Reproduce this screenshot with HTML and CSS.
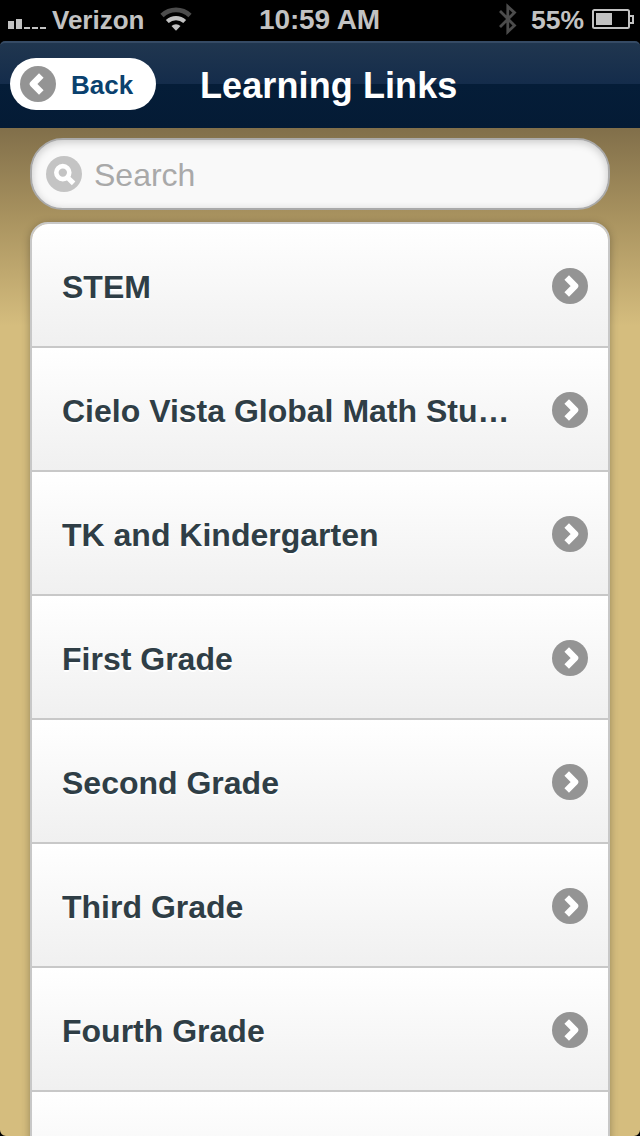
FILE: index.html
```html
<!DOCTYPE html>
<html lang="en">
<head>
    <meta charset="UTF-8">
    <meta name="viewport" content="width=device-width, initial-scale=1.0">
    <title>Learning Links</title>
    <link rel="stylesheet" href="styles.css">
</head>
<body>
    <!-- shared icons -->
    <svg class="defs" width="0" height="0">
        <symbol id="arrow" viewBox="0 0 36 36">
            <circle cx="18" cy="18" r="18" fill="#949494"/>
            <path d="M14.7 9.4L23.1 18l-8.4 8.6" fill="none" stroke="#fff" stroke-width="6.4" stroke-linejoin="round"/>
        </symbol>
    </svg>

    <!-- status bar -->
    <div class="status-bar">
        <div class="status-left">
            <svg width="38" height="10" viewBox="0 0 38 10" fill="#c2c2c2">
                <path d="M0 2h6v8H0zM8 0h6v10H8zM16 8h6v2h-6zM24 8h6v2h-6zM32 8h6v2h-6z"/>
            </svg>
            <span class="carrier">Verizon</span>
            <svg class="wifi" width="32" height="24" viewBox="0 0 32 24" fill="none">
                <path d="M2 8.5a20.5 20.5 0 0 1 28 0" stroke="#4c4c4c" stroke-width="4.8"/>
                <path d="M7.3 14.5a12.8 12.8 0 0 1 17.4 0" stroke="#c2c2c2" stroke-width="4.2"/>
                <path d="M11.5 19a6.5 6.5 0 0 1 9 0L16 23.7z" fill="#c2c2c2"/>
            </svg>
        </div>
        <span class="time">10:59 AM</span>
        <div class="status-right">
            <svg class="bluetooth" width="18" height="32" viewBox="0 0 18 32" fill="none" stroke="#4c4c4c" stroke-width="2.8">
                <path d="M1 8l14.5 14.4-6.7 6.4V3.4l6.7 6.2L1 24"/>
            </svg>
            <span class="percent">55%</span>
            <svg class="battery" width="42" height="20" viewBox="0 0 42 20">
                <rect x="1" y="1" width="36" height="18" rx="1.5" fill="none" stroke="#c2c2c2" stroke-width="2"/>
                <path d="M38 7h3v7h-3" fill="none" stroke="#c2c2c2" stroke-width="2"/>
                <rect x="4" y="4" width="16" height="12" fill="#c2c2c2"/>
            </svg>
        </div>
    </div>

    <div class="header">
        <a href="#" class="back-btn">
            <svg class="back-icon" width="36" height="36"><use href="#arrow"/></svg>
            <span>Back</span>
        </a>
        <h1>Learning Links</h1>
    </div>

    <div class="content">
        <label class="search">
            <svg width="36" height="36" viewBox="0 0 36 36" fill="none" stroke="#fff">
                <circle cx="18" cy="18" r="18" fill="#c4c4c4" stroke="none"/>
                <circle cx="16.8" cy="16.6" r="6.5" stroke-width="4.6"/>
                <path d="M21 21l6.6 6.4" stroke-width="5"/>
            </svg>
            <input type="text" placeholder="Search">
        </label>

        <ul class="links">
            <li><a href="#"><span>STEM</span><svg><use href="#arrow"/></svg></a></li>
            <li><a href="#"><span>Cielo Vista Global Math Stu…</span><svg><use href="#arrow"/></svg></a></li>
            <li><a href="#"><span>TK and Kindergarten</span><svg><use href="#arrow"/></svg></a></li>
            <li><a href="#"><span>First Grade</span><svg><use href="#arrow"/></svg></a></li>
            <li><a href="#"><span>Second Grade</span><svg><use href="#arrow"/></svg></a></li>
            <li><a href="#"><span>Third Grade</span><svg><use href="#arrow"/></svg></a></li>
            <li><a href="#"><span>Fourth Grade</span><svg><use href="#arrow"/></svg></a></li>
            <li><a href="#"></a></li>
        </ul>
    </div>

    <!-- rounded screen corners -->
    <svg class="corner corner-left" width="6" height="6"><path d="M0 0a6 6 0 0 0 6 6H0z"/></svg>
    <svg class="corner corner-right" width="6" height="6"><path d="M6 0a6 6 0 0 1-6 6h6z"/></svg>
</body>
</html>
```
FILE: styles.css
```css
* {
    box-sizing: border-box;
}
body {
    margin: 0;
    height: 1136px;
    overflow: hidden;
    display: flex;
    flex-direction: column;
    position: relative;
    background: #000;
    font-family: "Liberation Sans", Arial, Helvetica, sans-serif;
}
.defs {
    position: absolute;
}
/* status bar */
.status-bar {
    flex: none;
    height: 41px;
    padding: 0 6px 2px 8px;
    display: grid;
    grid-template-columns: 1fr auto 1fr;
    align-items: center;
    color: #c2c2c2;
    font-size: 26px;
    font-weight: bold;
    line-height: 38px;
}
.status-left,
.status-right {
    display: flex;
    align-items: center;
}
.status-left svg:first-child {
    margin-top: 9px;
}
.carrier {
    margin-left: 6px;
}
.wifi {
    margin: -1px 0 0 16px;
}
.time {
    margin-right: 3px;
    font-size: 28px;
    letter-spacing: -0.1px;
}
.status-right {
    justify-content: flex-end;
}
.bluetooth {
    margin-top: -1px;
}
.percent {
    margin: 0 8px 0 14px;
    font-size: 26.5px;
}
.battery {
    margin-top: -1px;
}
/* header */
.header {
    flex: none;
    height: 87px;
    padding: 1px 10px 0;
    display: flex;
    align-items: center;
    border-top: 2px solid #364b65;
    border-radius: 5px 5px 0 0;
    background: linear-gradient(#20364f 0, #142c4b 41px, #051d38 41px, #041b35 100%);
}
.back-btn {
    width: 146px;
    height: 52px;
    margin-top: -4px;
    padding-left: 10px;
    display: flex;
    align-items: center;
    gap: 15px;
    border-radius: 26px;
    background: #fff;
    color: #0a416e;
    font-size: 26px;
    font-weight: bold;
    text-decoration: none;
}
.back-btn span {
    padding-top: 2px;
}
.back-icon {
    transform: scaleX(-1);
}
.header h1 {
    margin: 0 0 0 44px;
    color: #fff;
    font-size: 36px;
    line-height: 44px;
    letter-spacing: 0.1px;
    white-space: nowrap;
}
/* content */
.content {
    flex: 1;
    min-height: 0;
    padding: 10px 30px 0;
    overflow: hidden;
    background: linear-gradient(#816f4a 0, #a8925f 88px, #d5bd7e 198px);
}
.search {
    height: 72px;
    padding: 0 14px;
    display: flex;
    align-items: center;
    gap: 12px;
    border: 2px solid #aaa;
    border-radius: 33px;
    background: #f9f9f9;
    box-shadow: inset 0 2px 8px rgba(0, 0, 0, 0.2);
}
.search input {
    flex: 1;
    min-width: 0;
    padding: 2px 0 0;
    border: none;
    outline: none;
    background: none;
    font: 32px "Liberation Sans", Arial, sans-serif;
}
.search input::placeholder {
    color: #a9a9a9;
    opacity: 1;
}
.links {
    margin: 12px 0 0;
    padding: 0;
    list-style: none;
    border: 2px solid #c8c8c8;
    border-radius: 18px 18px 0 0;
    overflow: hidden;
    box-shadow: 0 2px 8px rgba(0, 0, 0, 0.3);
}
.links li {
    height: 124px;
    border-bottom: 2px solid #c8c8c8;
    background: linear-gradient(#fff, #f0f0f0);
}
.links a {
    height: 100%;
    padding: 2px 20px 0 30px;
    display: flex;
    align-items: center;
    justify-content: space-between;
    color: #2f3e46;
    font-size: 32px;
    font-weight: bold;
    text-decoration: none;
    text-shadow: 0 2px 0 #fff;
    white-space: nowrap;
}
.links span {
    padding-top: 3px;
}
.links svg {
    width: 36px;
    height: 36px;
}
.corner {
    position: absolute;
    bottom: 0;
}
.corner-left {
    left: 0;
}
.corner-right {
    right: 0;
}
```
